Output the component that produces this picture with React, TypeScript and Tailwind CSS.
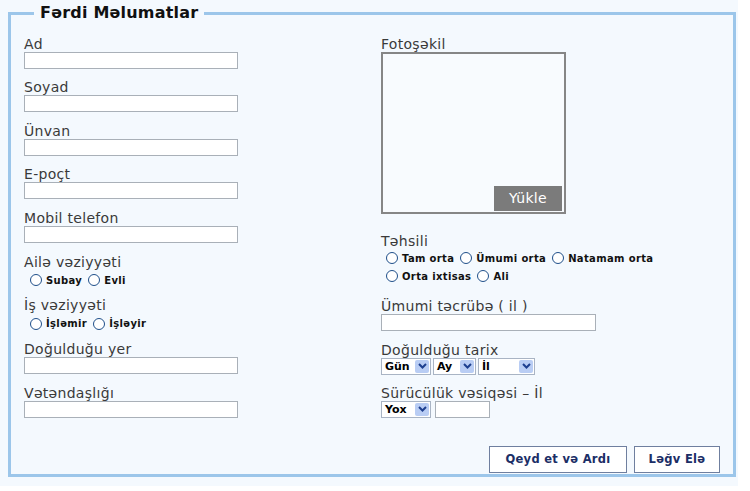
import React from "react";

const font = { fontFamily: '"DejaVu Sans", Verdana, sans-serif' };

function Radio({ label }: { label: string }) {
  return (
    <span className="mr-[6px] inline-flex items-center gap-[4px]">
      <span className="h-[12px] w-[12px] rounded-full border-[1.5px] border-[#1f4f8a] bg-white" />
      <span className="text-[10px] font-bold tracking-[0.35px] text-[#111]">{label}</span>
    </span>
  );
}

function Label({ text, className = "" }: { text: string; className?: string }) {
  return (
    <div className={`h-[16px] text-[14px] leading-[16px] tracking-[0.3px] text-[#3a3a3a] ${className}`}>{text}</div>
  );
}

function Field({ label }: { label: string }) {
  return (
    <div className="h-[43.67px]">
      <Label text={label} />
      <div className="h-[17px] w-[214px] border border-[#a9b0b8] bg-white" />
    </div>
  );
}

function RadioField({ label, options }: { label: string; options: string[] }) {
  return (
    <div className="h-[43.67px]">
      <Label text={label} />
      <div className="mt-[3px] flex h-[15px] items-center pl-[6px]">
        {options.map((o) => (
          <Radio key={o} label={o} />
        ))}
      </div>
    </div>
  );
}

function Select({ text, width }: { text: string; width: string }) {
  return (
    <div className={`flex h-[17px] items-center justify-between border border-[#a9b4c4] bg-white pl-[3px] pr-[1px] ${width}`}>
      <span className="text-[11px] font-bold leading-none text-black">{text}</span>
      <span className="flex h-[13px] w-[14px] items-center justify-center rounded-[2px] bg-[#b9cdf4]">
        <svg width="9" height="6" viewBox="0 0 9 6">
          <polyline points="1,1 4.5,4.5 8,1" fill="none" stroke="#1d3f8f" strokeWidth="2" />
        </svg>
      </span>
    </div>
  );
}

export default function App() {
  return (
    <div className="min-h-screen bg-white" style={font}>
      <div className="h-[486px] w-[738px] bg-[#f4f9fe] pl-[8px] pt-[3px]">
        <fieldset className="flex h-[474px] w-[728px] flex-col border-[3px] border-[#9cc6ea] bg-[#f4f9fe] px-[13px] pb-[1px]">
          <legend className="ml-[10px] px-[6px] text-[16px] font-bold leading-[20px] tracking-[0.2px] text-[#111]">
            Fərdi Məlumatlar
          </legend>

          <div className="mt-[12.5px] flex">
            <div className="w-[214px]">
              <Field label="Ad" />
              <Field label="Soyad" />
              <Field label="Ünvan" />
              <Field label="E-poçt" />
              <Field label="Mobil telefon" />
              <RadioField label="Ailə vəziyyəti" options={["Subay", "Evli"]} />
              <RadioField label="İş vəziyyəti" options={["İşləmir", "İşləyir"]} />
              <Field label="Doğulduğu yer" />
              <Field label="Vətəndaşlığı" />
            </div>

            <div className="ml-[143px] flex flex-col">
              <Label text="Fotoşəkil" />
              <div className="relative h-[162px] w-[185px] border-2 border-[#868686] bg-[#f8fbfe]">
                <button className="absolute bottom-[1px] right-[2px] h-[25px] w-[68px] bg-[#7b7b7b] text-[14px] tracking-[0.3px] text-white">
                  Yükle
                </button>
              </div>

              <Label text="Təhsili" className="mt-[19.5px]" />
              <div className="flex h-[18px] items-center pl-[5px]">
                <Radio label="Tam orta" />
                <Radio label="Ümumi orta" />
                <Radio label="Natamam orta" />
              </div>
              <div className="flex h-[18px] items-center pl-[5px]">
                <Radio label="Orta ixtisas" />
                <Radio label="Ali" />
              </div>

              <Label text="Ümumi təcrübə ( il )" className="mt-[13px]" />
              <div className="h-[17px] w-[215px] border border-[#a9b0b8] bg-white" />

              <Label text="Doğulduğu tarix" className="mt-[10.7px]" />
              <div className="flex gap-[2px]">
                <Select text="Gün" width="w-[50px]" />
                <Select text="Ay" width="w-[43px]" />
                <Select text="İl" width="w-[57px]" />
              </div>

              <Label text="Sürücülük vəsiqəsi – İl" className="mt-[10.3px]" />
              <div className="flex gap-[4px]">
                <Select text="Yox" width="w-[50px]" />
                <div className="h-[17px] w-[55px] border border-[#a9b0b8] bg-white" />
              </div>
            </div>
          </div>

          <div className="mt-auto flex justify-end gap-[7px]">
            <button className="h-[27px] w-[138px] border border-[#6f7f9f] bg-white text-[11.5px] font-bold tracking-[0.3px] text-[#1b2e66]">
              Qeyd et və Ardı
            </button>
            <button className="h-[27px] w-[86px] border border-[#6f7f9f] bg-white text-[11.5px] font-bold tracking-[0.3px] text-[#1b2e66]">
              Ləğv Elə
            </button>
          </div>
        </fieldset>
      </div>
    </div>
  );
}
